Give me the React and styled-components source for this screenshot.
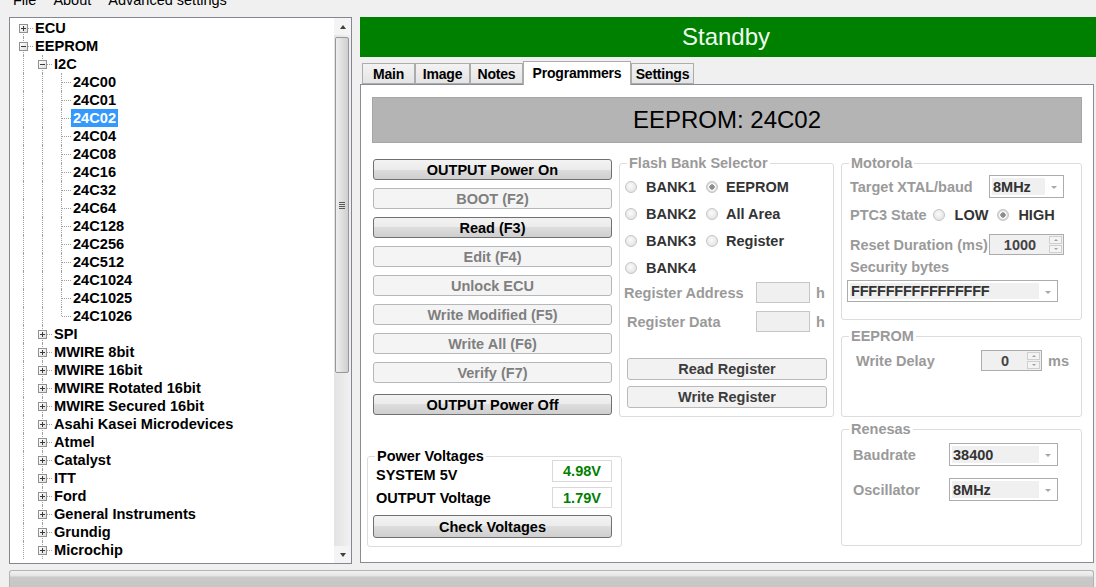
import React from 'react';
import styled, { createGlobalStyle, css } from 'styled-components';

const GlobalStyle = createGlobalStyle`
  html, body { margin: 0; padding: 0; background: #f0f0f0; }
  body { font-family: "Liberation Sans", Arial, sans-serif; color: #000; }
  #root { width: 1096px; height: 587px; overflow: hidden; }
  * { box-sizing: border-box; }
`;

const Window = styled.div`
  width: 1096px;
  height: 587px;
  display: flex;
  flex-direction: column;
  overflow: hidden;
  background: #f0f0f0;
`;

const MenuBar = styled.div`
  height: 17px;
  flex: none;
  display: flex;
  gap: 17px;
  padding-left: 13px;
  overflow: hidden;
  font-size: 14.5px;
`;

const MenuItem = styled.span`
  margin-top: -8px;
  line-height: 17px;
`;

const MainRow = styled.div`
  display: flex;
  height: 547px;
  flex: none;
  padding-left: 9px;
`;

/* ---------- tree ---------- */

const Tree = styled.div`
  width: 343px;
  height: 547px;
  flex: none;
  display: flex;
  border: 1px solid #828790;
  background: #fff;
  overflow: hidden;
`;

const TreeBody = styled.div`
  flex: 1;
  padding: 1px 0 0 4px;
  overflow: hidden;
`;

const TreeRow = styled.div`
  display: flex;
  align-items: center;
  height: 18px;
`;

const Guide = styled.span`
  position: relative;
  flex: none;
  width: 19px;
  height: 18px;
`;

const VLine = styled.span`
  position: absolute;
  left: 9px;
  top: ${(p) => p.$top || 0}px;
  bottom: ${(p) => p.$bottom || 0}px;
  border-left: 1px dotted #a0a0a0;
`;

const HLine = styled.span`
  position: absolute;
  left: 10px;
  right: 0;
  top: 9px;
  border-top: 1px dotted #a0a0a0;
`;

const Expander = styled.span`
  position: absolute;
  left: 5px;
  top: 5px;
  width: 9px;
  height: 9px;
  border: 1px solid #919191;
  background: linear-gradient(135deg, #ffffff, #dedede);
  &::before {
    content: '';
    position: absolute;
    left: 1px;
    top: 3px;
    width: 5px;
    height: 1px;
    background: #3a3a3a;
  }
  ${(p) =>
    !p.$open &&
    css`
      &::after {
        content: '';
        position: absolute;
        left: 3px;
        top: 1px;
        width: 1px;
        height: 5px;
        background: #3a3a3a;
      }
    `}
`;

const NodeLabel = styled.span`
  height: 18px;
  line-height: 18px;
  padding: 0 2px;
  font-weight: bold;
  font-size: 14.6px;
  white-space: nowrap;
  background: ${(p) => (p.$selected ? '#3399ff' : 'transparent')};
  color: ${(p) => (p.$selected ? '#fff' : '#000')};
`;

const ScrollBar = styled.div`
  width: 17px;
  flex: none;
  display: flex;
  flex-direction: column;
  background: linear-gradient(90deg, #e3e3e3, #f1f1f1);
`;

const ScrollArrow = styled.div`
  height: 17px;
  flex: none;
  display: flex;
  align-items: center;
  justify-content: center;
  background: #f4f4f4;
  &::before {
    content: '';
    border-left: 3.5px solid transparent;
    border-right: 3.5px solid transparent;
    ${(p) => (p.$down ? 'border-top: 4px solid #404040;' : 'border-bottom: 4px solid #404040;')}
  }
`;

const Track = styled.div`
  flex: 1;
  padding: 2px 2px 0 1px;
`;

const Thumb = styled.div`
  height: 336px;
  border: 1px solid #979797;
  border-radius: 2px;
  background: linear-gradient(90deg, #eeeeee, #dcdcdc 60%, #cfcfcf);
  display: flex;
  align-items: center;
  justify-content: center;
`;

const Grip = styled.span`
  width: 6px;
  height: 7px;
  background: repeating-linear-gradient(#5a5a5a 0 1px, transparent 1px 2px);
`;

/* ---------- right side ---------- */

const RightPane = styled.div`
  margin-left: 8px;
  flex: 1;
  display: flex;
  flex-direction: column;
`;

const StatusBanner = styled.div`
  height: 40px;
  flex: none;
  background: #008000;
  color: #eefdee;
  font-size: 24px;
  display: flex;
  align-items: center;
  justify-content: center;
  padding-right: 4px;
`;

const TabStrip = styled.div`
  height: 27px;
  flex: none;
  display: flex;
  align-items: flex-end;
  padding-left: 2px;
`;

const Tab = styled.div`
  width: ${(p) => p.$w}px;
  height: ${(p) => (p.$active ? 24 : 21)}px;
  margin-bottom: ${(p) => (p.$active ? -1 : 0)}px;
  position: relative;
  z-index: ${(p) => (p.$active ? 1 : 0)};
  border: 1px solid #acacac;
  border-bottom: ${(p) => (p.$active ? 'none' : '1px solid #acacac')};
  background: ${(p) => (p.$active ? '#fff' : 'linear-gradient(#f3f3f3, #e4e4e4)')};
  font-size: 14px;
  font-weight: bold;
  display: flex;
  align-items: ${(p) => (p.$active ? 'flex-start' : 'center')};
  padding-top: ${(p) => (p.$active ? 3 : 0)}px;
  justify-content: center;
  letter-spacing: -0.2px;
`;

const TabPanel = styled.div`
  width: 734px;
  height: 479px;
  border: 1px solid #898c95;
  background: #fff;
  padding: 12px 11px 0;
`;

const DeviceBar = styled.div`
  height: 46px;
  background: #b4b4b4;
  border: 1px solid #a6a6a6;
  font-size: 24px;
  display: flex;
  align-items: center;
  justify-content: center;
`;

const Columns = styled.div`
  display: flex;
  margin-top: 12px;
  margin-left: -5px;
`;

const LeftCol = styled.div`
  width: 252px;
  flex: none;
  padding-top: 4px;
`;

const ButtonStack = styled.div`
  margin-left: 6px;
  display: flex;
  flex-direction: column;
  gap: 8px;
`;

const Button = styled.button`
  display: block;
  width: ${(p) => p.$w || 239}px;
  height: ${(p) => p.$h || 21}px;
  margin: 0;
  margin-top: ${(p) => p.$mt || 0}px;
  margin-left: ${(p) => p.$ml || 0}px;
  padding: 0;
  border-radius: 3px;
  font: bold 14.5px "Liberation Sans", Arial, sans-serif;
  ${(p) =>
    p.$variant === 'disabled'
      ? css`
          border: 1px solid #b4b8bb;
          background: #f4f4f4;
          color: #7f7f7f;
        `
      : p.$variant === 'soft'
      ? css`
          border: 1px solid #bababa;
          background: #f2f2f2;
          color: #3c3c3c;
        `
      : css`
          border: 1px solid #707070;
          background: linear-gradient(#f3f3f3 0%, #ebebeb 50%, #dddddd 50%, #cfcfcf 100%);
          color: #000;
        `}
`;

const Group = styled.div`
  position: relative;
  width: ${(p) => p.$w}px;
  height: ${(p) => p.$h}px;
  margin-top: ${(p) => p.$mt || 0}px;
  border: 1px solid #dcdcdc;
  border-radius: 3px;
  padding: ${(p) => p.$pad || '0'};
`;

const Legend = styled.span`
  position: absolute;
  top: -9px;
  left: 7px;
  padding: 0 2px;
  background: #fff;
  font-size: 14.5px;
  font-weight: bold;
  line-height: 16px;
  color: ${(p) => (p.$dark ? '#000' : '#9a9a9a')};
`;

const Label = styled.span`
  font-size: 14.5px;
  font-weight: bold;
  line-height: 16px;
  white-space: nowrap;
  color: ${(p) => p.$color || '#9a9a9a'};
  padding-left: ${(p) => p.$indent || 0}px;
  margin-top: ${(p) => p.$dy || 0}px;
  width: ${(p) => (p.$w ? `${p.$w}px` : 'auto')};
  flex: none;
`;

/* power voltages */

const VoltRow = styled.div`
  display: flex;
  align-items: center;
  justify-content: space-between;
  height: ${(p) => p.$h}px;
  margin-top: ${(p) => p.$mt || 0}px;
`;

const ValueBox = styled.div`
  width: 60px;
  height: 100%;
  border: 1px solid #d9d9d9;
  color: #008000;
  font-size: 14.5px;
  font-weight: bold;
  display: flex;
  align-items: center;
  justify-content: center;
`;

/* radios */

const RadioGrid = styled.div`
  display: grid;
  grid-template-columns: 81px 1fr;
  grid-auto-rows: 27px;
  padding-left: 5px;
`;

const RadioOpt = styled.label`
  display: flex;
  align-items: center;
  gap: ${(p) => p.$gap || 9}px;
  margin-left: ${(p) => p.$ml || 0}px;
  font-size: 14.5px;
  font-weight: bold;
  color: #333;
  white-space: nowrap;
`;

const RadioDot = styled.span`
  width: 12px;
  height: 12px;
  flex: none;
  border-radius: 50%;
  border: 1px solid #c4c4c4;
  background: ${(p) =>
    p.$checked
      ? 'radial-gradient(circle, #8c8c8c 0 2.4px, #f6f6f6 2.9px 3.6px, #dadada 4.2px)'
      : 'radial-gradient(circle at 45% 40%, #fbfbfb, #dcdcdc)'};
`;

const FieldRow = styled.div`
  display: flex;
  align-items: center;
  height: ${(p) => p.$h || 21}px;
  margin-top: ${(p) => p.$mt || 0}px;
`;

const HexBox = styled.div`
  width: 54px;
  height: 21px;
  border: 1px solid #c6c6c6;
  background: #f0f0f0;
`;

const Unit = styled.span`
  margin-left: 6px;
  font-size: 14.5px;
  font-weight: bold;
  color: #9a9a9a;
`;

/* combo + numeric */

const Combo = styled.div`
  width: ${(p) => p.$w}px;
  height: ${(p) => p.$h || 23}px;
  margin-left: ${(p) => p.$ml || 0}px;
  margin-top: ${(p) => p.$mt || 0}px;
  border: 1px solid #acacac;
  background: #fff;
  display: flex;
  padding: 2px 0 2px 2px;
  flex: none;
`;

const ComboText = styled.span`
  flex: 1;
  background: #f0f0f0;
  color: #333;
  font-size: 14.5px;
  font-weight: bold;
  padding-left: 1px;
  display: flex;
  align-items: center;
  letter-spacing: ${(p) => p.$tight || 0}px;
`;

const ComboArrow = styled.span`
  width: 18px;
  display: flex;
  align-items: center;
  justify-content: center;
  padding-top: 2px;
  &::before {
    content: '';
    border-left: 3.5px solid transparent;
    border-right: 3.5px solid transparent;
    border-top: 3.5px solid #a8a8a8;
  }
`;

const Numeric = styled.div`
  width: ${(p) => p.$w}px;
  height: 21px;
  flex: none;
  border: 1px solid #acacac;
  background: #f0f0f0;
  display: flex;
  padding: 1px;
`;

const NumText = styled.span`
  flex: 1;
  display: flex;
  align-items: center;
  justify-content: center;
  font-size: 14.5px;
  font-weight: bold;
  color: #444;
`;

const Spinner = styled.span`
  width: 13px;
  display: flex;
  flex-direction: column;
  gap: 1px;
`;

const SpinBtn = styled.span`
  flex: 1;
  border: 1px solid #cfcfcf;
  background: #f4f4f4;
  display: flex;
  align-items: center;
  justify-content: center;
  &::before {
    content: '';
    border-left: 2.5px solid transparent;
    border-right: 2.5px solid transparent;
    ${(p) => (p.$down ? 'border-top: 2.5px solid #a0a0a0;' : 'border-bottom: 2.5px solid #a0a0a0;')}
  }
`;

const MiddleCol = styled.div`
  width: 215px;
  flex: none;
`;

const RightCol = styled.div`
  width: 241px;
  flex: none;
  margin-left: 7px;
`;

const MotoRow = styled.div`
  display: flex;
  align-items: center;
  justify-content: space-between;
  height: ${(p) => p.$h}px;
  margin-top: ${(p) => p.$mt || 0}px;
`;

const PtcRow = styled.div`
  display: flex;
  align-items: center;
  height: 20px;
  margin-top: 7px;
`;

const StatusStrip = styled.div`
  margin: 6px 2px 0 9px;
  height: 20px;
  flex: none;
  border: 1px solid #b3b3b3;
  border-bottom: none;
  border-radius: 3px 3px 0 0;
  background: linear-gradient(#f2f2f2 0, #e4e4e4 5px, #c9c9c9 6px, #c6c6c6 100%);
`;

const chips = ['24C00', '24C01', '24C02', '24C04', '24C08', '24C16', '24C32', '24C64', '24C128', '24C256', '24C512', '24C1024', '24C1025', '24C1026'];
const families = ['SPI', 'MWIRE 8bit', 'MWIRE 16bit', 'MWIRE Rotated 16bit', 'MWIRE Secured 16bit', 'Asahi Kasei Microdevices', 'Atmel', 'Catalyst', 'ITT', 'Ford', 'General Instruments', 'Grundig', 'Microchip'];

const treeRows = [
  { label: 'ECU', guides: [], expander: 'plus', first: true },
  { label: 'EEPROM', guides: [], expander: 'minus' },
  { label: 'I2C', guides: [true], expander: 'minus' },
  ...chips.map((c, i) => ({ label: c, guides: [true, true], last: i === chips.length - 1, selected: c === '24C02' })),
  ...families.map((f) => ({ label: f, guides: [true], expander: 'plus' })),
];

const TreeNode = ({ node }) => (
  <TreeRow>
    {node.guides.map((g, i) => (
      <Guide key={i}>{g && <VLine />}</Guide>
    ))}
    <Guide>
      <VLine $top={node.first ? 9 : 0} $bottom={node.last ? 9 : 0} />
      <HLine />
      {node.expander && <Expander $open={node.expander === 'minus'} />}
    </Guide>
    <NodeLabel $selected={node.selected}>{node.label}</NodeLabel>
  </TreeRow>
);

const Radio = ({ label, checked, gap, ml }) => (
  <RadioOpt $gap={gap} $ml={ml}>
    <RadioDot $checked={checked} />
    {label}
  </RadioOpt>
);

const ComboBox = ({ value, w, h, ml, mt, tight }) => (
  <Combo $w={w} $h={h} $ml={ml} $mt={mt}>
    <ComboText $tight={tight}>{value}</ComboText>
    <ComboArrow />
  </Combo>
);

const NumericBox = ({ value, w }) => (
  <Numeric $w={w}>
    <NumText>{value}</NumText>
    <Spinner>
      <SpinBtn />
      <SpinBtn $down />
    </Spinner>
  </Numeric>
);

const tabs = [
  { name: 'Main', w: 53 },
  { name: 'Image', w: 55 },
  { name: 'Notes', w: 53 },
  { name: 'Programmers', w: 108, active: true },
  { name: 'Settings', w: 63 },
];

const actions = [
  { text: 'OUTPUT Power On' },
  { text: 'BOOT (F2)', variant: 'disabled' },
  { text: 'Read (F3)' },
  { text: 'Edit (F4)', variant: 'disabled' },
  { text: 'Unlock ECU', variant: 'disabled' },
  { text: 'Write Modified (F5)', variant: 'disabled' },
  { text: 'Write All (F6)', variant: 'disabled' },
  { text: 'Verify (F7)', variant: 'disabled' },
  { text: 'OUTPUT Power Off', mt: 3 },
];

const App = () => (
  <>
    <GlobalStyle />
    <Window>
      <MenuBar>
        <MenuItem>File</MenuItem>
        <MenuItem>About</MenuItem>
        <MenuItem>Advanced settings</MenuItem>
      </MenuBar>

      <MainRow>
        <Tree>
          <TreeBody>
            {treeRows.map((n) => (
              <TreeNode key={n.label} node={n} />
            ))}
          </TreeBody>
          <ScrollBar>
            <ScrollArrow />
            <Track>
              <Thumb>
                <Grip />
              </Thumb>
            </Track>
            <ScrollArrow $down />
          </ScrollBar>
        </Tree>

        <RightPane>
          <StatusBanner>Standby</StatusBanner>
          <TabStrip>
            {tabs.map((t) => (
              <Tab key={t.name} $w={t.w} $active={t.active}>
                {t.name}
              </Tab>
            ))}
          </TabStrip>
          <TabPanel>
            <DeviceBar>EEPROM: 24C02</DeviceBar>
            <Columns>
              <LeftCol>
                <ButtonStack>
                  {actions.map((a) => (
                    <Button key={a.text} $variant={a.variant} $mt={a.mt}>
                      {a.text}
                    </Button>
                  ))}
                </ButtonStack>

                <Group $w={255} $h={91} $mt={41} $pad="3px 9px 0 5px">
                  <Legend $dark>Power Voltages</Legend>
                  <VoltRow $h={22}>
                    <Label $color="#000" $indent={3} $dy={7}>SYSTEM 5V</Label>
                    <ValueBox>4.98V</ValueBox>
                  </VoltRow>
                  <VoltRow $h={21} $mt={5}>
                    <Label $color="#000" $indent={3}>OUTPUT Voltage</Label>
                    <ValueBox>1.79V</ValueBox>
                  </VoltRow>
                  <Button $h={23} $mt={7}>Check Voltages</Button>
                </Group>
              </LeftCol>

              <MiddleCol>
                <Group $w={215} $h={254} $mt={8} $pad="9px 0 0 0">
                  <Legend>Flash Bank Selector</Legend>
                  <RadioGrid>
                    <Radio label="BANK1" />
                    <Radio label="EEPROM" checked gap={8} />
                    <Radio label="BANK2" />
                    <Radio label="All Area" gap={8} />
                    <Radio label="BANK3" />
                    <Radio label="Register" gap={8} />
                    <Radio label="BANK4" />
                  </RadioGrid>
                  <FieldRow $mt={1}>
                    <Label $w={136} $indent={4}>Register Address</Label>
                    <HexBox />
                    <Unit>h</Unit>
                  </FieldRow>
                  <FieldRow $mt={8}>
                    <Label $w={136} $indent={7}>Register Data</Label>
                    <HexBox />
                    <Unit>h</Unit>
                  </FieldRow>
                  <Button $variant="soft" $w={200} $h={22} $mt={26} $ml={7}>Read Register</Button>
                  <Button $variant="soft" $w={200} $h={22} $mt={6} $ml={7}>Write Register</Button>
                </Group>
              </MiddleCol>

              <RightCol>
                <Group $w={241} $h={157} $mt={8} $pad="11px 17px 0 8px">
                  <Legend>Motorola</Legend>
                  <MotoRow $h={23}>
                    <Label>Target XTAL/baud</Label>
                    <ComboBox value="8MHz" w={75} />
                  </MotoRow>
                  <PtcRow>
                    <Label>PTC3 State</Label>
                    <Radio label="LOW" ml={6} gap={10} />
                    <Radio label="HIGH" checked ml={9} gap={9} />
                  </PtcRow>
                  <MotoRow $h={21} $mt={9}>
                    <Label>Reset Duration (ms)</Label>
                    <NumericBox value="1000" w={75} />
                  </MotoRow>
                  <MotoRow $h={16} $mt={4}>
                    <Label>Security bytes</Label>
                  </MotoRow>
                  <ComboBox value="FFFFFFFFFFFFFFFF" w={211} h={22} ml={-3} mt={5} tight={-0.2} />
                </Group>

                <Group $w={241} $h={81} $mt={16} $pad="13px 0 0 8px">
                  <Legend>EEPROM</Legend>
                  <FieldRow>
                    <Label $w={131} $indent={6}>Write Delay</Label>
                    <NumericBox value="0" w={61} />
                    <Unit>ms</Unit>
                  </FieldRow>
                </Group>

                <Group $w={241} $h={117} $mt={12} $pad="13px 0 0 8px">
                  <Legend>Renesas</Legend>
                  <FieldRow $h={23}>
                    <Label $w={99} $indent={3}>Baudrate</Label>
                    <ComboBox value="38400" w={109} />
                  </FieldRow>
                  <FieldRow $h={23} $mt={12}>
                    <Label $w={99} $indent={3}>Oscillator</Label>
                    <ComboBox value="8MHz" w={109} />
                  </FieldRow>
                </Group>
              </RightCol>
            </Columns>
          </TabPanel>
        </RightPane>
      </MainRow>

      <StatusStrip />
    </Window>
  </>
);

export default App;
